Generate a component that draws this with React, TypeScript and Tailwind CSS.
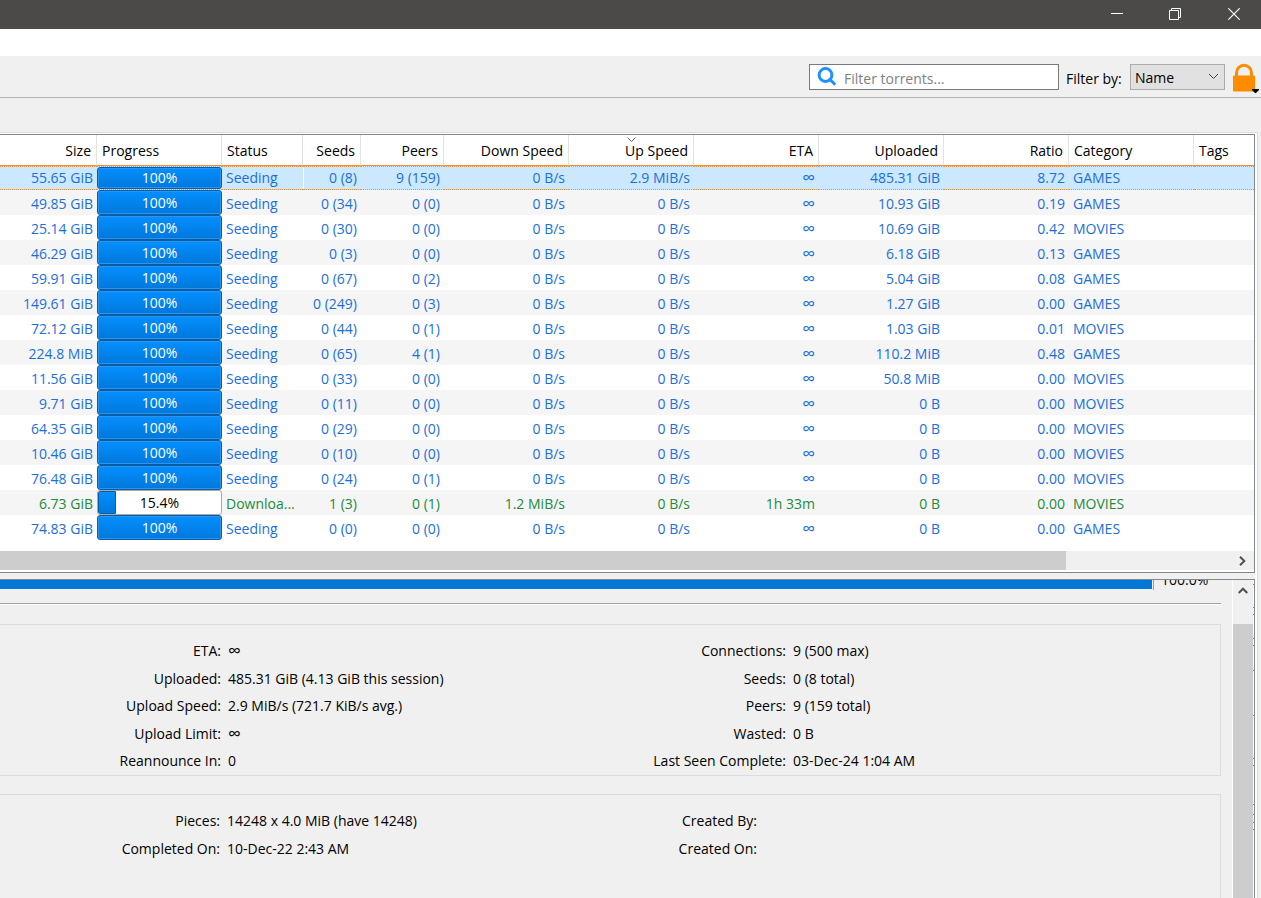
import React from "react";

type Torrent = {
  size: string;
  progress: number;
  status: string;
  seeds: string;
  peers: string;
  down: string;
  up: string;
  eta: string;
  uploaded: string;
  ratio: string;
  category: string;
};

const seeding = (
  size: string,
  seeds: string,
  peers: string,
  uploaded: string,
  ratio: string,
  category: string,
  up = "0 B/s",
): Torrent => ({
  size,
  progress: 100,
  status: "Seeding",
  seeds,
  peers,
  down: "0 B/s",
  up,
  eta: "∞",
  uploaded,
  ratio,
  category,
});

const torrents: Torrent[] = [
  seeding("55.65 GiB", "0 (8)", "9 (159)", "485.31 GiB", "8.72", "GAMES", "2.9 MiB/s"),
  seeding("49.85 GiB", "0 (34)", "0 (0)", "10.93 GiB", "0.19", "GAMES"),
  seeding("25.14 GiB", "0 (30)", "0 (0)", "10.69 GiB", "0.42", "MOVIES"),
  seeding("46.29 GiB", "0 (3)", "0 (0)", "6.18 GiB", "0.13", "GAMES"),
  seeding("59.91 GiB", "0 (67)", "0 (2)", "5.04 GiB", "0.08", "GAMES"),
  seeding("149.61 GiB", "0 (249)", "0 (3)", "1.27 GiB", "0.00", "GAMES"),
  seeding("72.12 GiB", "0 (44)", "0 (1)", "1.03 GiB", "0.01", "MOVIES"),
  seeding("224.8 MiB", "0 (65)", "4 (1)", "110.2 MiB", "0.48", "GAMES"),
  seeding("11.56 GiB", "0 (33)", "0 (0)", "50.8 MiB", "0.00", "MOVIES"),
  seeding("9.71 GiB", "0 (11)", "0 (0)", "0 B", "0.00", "MOVIES"),
  seeding("64.35 GiB", "0 (29)", "0 (0)", "0 B", "0.00", "MOVIES"),
  seeding("10.46 GiB", "0 (10)", "0 (0)", "0 B", "0.00", "MOVIES"),
  seeding("76.48 GiB", "0 (24)", "0 (1)", "0 B", "0.00", "MOVIES"),
  {
    size: "6.73 GiB",
    progress: 15.4,
    status: "Downloa...",
    seeds: "1 (3)",
    peers: "0 (1)",
    down: "1.2 MiB/s",
    up: "0 B/s",
    eta: "1h 33m",
    uploaded: "0 B",
    ratio: "0.00",
    category: "MOVIES",
  },
  seeding("74.83 GiB", "0 (0)", "0 (0)", "0 B", "0.00", "GAMES"),
];

const columns = [
  { label: "Size", width: "w-[97px]", right: true },
  { label: "Progress", width: "w-[125px]", right: false },
  { label: "Status", width: "w-[81px]", right: false },
  { label: "Seeds", width: "w-[58px]", right: true },
  { label: "Peers", width: "w-[83px]", right: true },
  { label: "Down Speed", width: "w-[125px]", right: true },
  { label: "Up Speed", width: "w-[125px]", right: true, sorted: true },
  { label: "ETA", width: "w-[125px]", right: true },
  { label: "Uploaded", width: "w-[125px]", right: true },
  { label: "Ratio", width: "w-[125px]", right: true },
  { label: "Category", width: "w-[125px]", right: false },
  { label: "Tags", width: "w-auto", right: false },
];

function TitleBar() {
  return (
    <header className="flex h-[29px] items-center justify-end bg-[#4c4a48] pb-[2px] text-white">
      <button aria-label="Minimize" className="flex h-full w-[52px] items-center justify-center">
        <svg width="12" height="12" viewBox="0 0 12 12" stroke="currentColor" fill="none">
          <path d="M0 5.5h12" />
        </svg>
      </button>
      <button aria-label="Restore" className="flex h-full w-[64px] items-center justify-center">
        <svg width="12" height="12" viewBox="0 0 12 12" stroke="currentColor" fill="none">
          <path d="M.5 2.5h9v9h-9zM2.5 2.5v-2h9v9h-2" />
        </svg>
      </button>
      <button aria-label="Close" className="flex h-full w-[54px] items-center justify-center">
        <svg width="12" height="12" viewBox="0 0 12 12" stroke="currentColor" strokeWidth="1.2" fill="none">
          <path d="M.3.3l11.4 11.4M11.7.3L.3 11.7" />
        </svg>
      </button>
    </header>
  );
}

function Toolbar() {
  return (
    <div className="flex h-[42px] items-center justify-end border-b border-[#b4b4b4] pr-[2px]">
      <div className="flex h-[26px] w-[250px] items-center gap-2 border border-[#7a7a7a] bg-white pl-[7px]">
        <svg width="19" height="19" viewBox="0 0 19 19" fill="none" stroke="#1e90ff">
          <circle cx="8.5" cy="8" r="6.4" strokeWidth="3" />
          <path d="M13 12.5l4.3 4.3" strokeWidth="3" strokeLinecap="round" />
        </svg>
        <input
          type="text"
          aria-label="Filter torrents"
          placeholder="Filter torrents..."
          className="min-w-0 flex-1 bg-transparent pt-1 outline-none placeholder:text-[#7f7f7f]"
        />
      </div>
      <label htmlFor="filter-by" className="ml-[7px] w-16 pt-1">
        Filter by:
      </label>
      <div className="grid h-[26px] w-[95px] items-center border border-[#adadad] bg-[#e1e1e1]">
        <select id="filter-by" className="col-start-1 row-start-1 h-full w-full appearance-none bg-transparent pt-[2px] pl-1 outline-none">
          <option>Name</option>
        </select>
        <svg className="pointer-events-none col-start-1 row-start-1 mr-[5px] justify-self-end" width="11" height="7" viewBox="0 0 11 7" fill="none" stroke="#404040">
          <path d="M1 1l4.5 4.5L10 1" />
        </svg>
      </div>
      <button aria-label="Lock" className="ml-2 pt-[2px]">
        <svg width="26" height="30" viewBox="0 0 26 30">
          <path d="M3.5 13V10a7.5 7.7 0 0 1 15 0v3" fill="none" stroke="#ff8c00" strokeWidth="3" />
          <rect x="0" y="12.5" width="22" height="16" rx="1" fill="#ff8c00" />
          <path d="M19 26h7v1l-3 3h-1l-3-3z" fill="#000" />
        </svg>
      </button>
    </div>
  );
}

function Value({ text }: { text: string }) {
  return text === "∞" ? <span className="align-[-1px] text-[18px] leading-[14px]">∞</span> : <>{text}</>;
}

function ProgressCell({ value, selected }: { value: number; selected: boolean }) {
  const done = value === 100;
  return (
    <div
      role="progressbar"
      aria-valuenow={value}
      className={`grid items-center rounded-[3px] border text-center ${selected ? "h-[22px]" : "h-[25px]"} ${
        done
          ? "border-[#0a5ca3] bg-linear-to-b from-[#058fff] to-[#0078dc] text-white shadow-[inset_0_0_0_1px_#2a94ee]"
          : "overflow-hidden border-[#a8a8a8] bg-white text-black"
      }`}
    >
      {!done && (
        <div
          className="col-start-1 row-start-1 h-full rounded-l-[2px] border border-[#0a5ca3] bg-linear-to-b from-[#058fff] to-[#0078dc]"
          style={{ width: `${value - 1}%` }}
        />
      )}
      <span className={`col-start-1 row-start-1 leading-[20px] ${selected ? "" : "pt-px"}`}>{value}%</span>
    </div>
  );
}

function TorrentTable() {
  return (
    <table className="w-full table-fixed border-separate border-spacing-0">
      <thead>
        <tr>
          {columns.map((c, i) => (
            <th
              key={c.label}
              className={`${c.width} ${c.right ? "text-right" : "text-left"} ${
                i < columns.length - 1 ? "border-r border-r-[#e2e2e2]" : ""
              } relative h-[31px] border-b border-b-[#ff8c32] px-[5px] pt-[2px] pb-0 font-normal`}
            >
              {c.label}
              {c.sorted && (
                <svg className="absolute top-[2px] left-[47%]" width="9" height="5" viewBox="0 0 9 5" fill="none" stroke="#606060">
                  <path d="M.5.5l4 4 4-4" />
                </svg>
              )}
            </th>
          ))}
        </tr>
      </thead>
      <tbody>
        {torrents.map((t, i) => {
          const selected = i === 0;
          const line = selected ? "h-[24px] border-y border-dotted border-y-[#ff8c32]" : "h-[25px]";
          const pad = selected ? "py-0" : "pt-[2px] pb-0";
          const right = `${pad} pr-1 text-right ${line}`;
          const left = `${pad} pl-1 text-left ${line}`;
          return (
            <tr
              key={i}
              className={`${selected ? "bg-[#cce8ff]" : i % 2 ? "bg-[#f5f5f5]" : "bg-white"} ${
                t.progress === 100 ? "text-[#1a6fdc]" : "text-[#228b3c]"
              } whitespace-nowrap leading-[22px]`}
            >
              <td className={right}>{t.size}</td>
              <td className={`p-0 ${line}`}>
                <ProgressCell value={t.progress} selected={selected} />
              </td>
              <td className={left}>{t.status}</td>
              <td className={`${right} ${selected ? "shadow-[inset_1px_0_0_#fff]" : ""}`}>{t.seeds}</td>
              <td className={right}>{t.peers}</td>
              <td className={right}>{t.down}</td>
              <td className={right}>{t.up}</td>
              <td className={right}>
                <Value text={t.eta} />
              </td>
              <td className={right}>{t.uploaded}</td>
              <td className={right}>{t.ratio}</td>
              <td className={left}>{t.category}</td>
              <td className={left}></td>
            </tr>
          );
        })}
      </tbody>
    </table>
  );
}

function Facts({ rows, labelWidth, grow }: { rows: [string, string][]; labelWidth: string; grow?: boolean }) {
  return (
    <dl className={grow ? "min-w-0 flex-1" : "w-[565px]"}>
      {rows.map(([k, v], i) => (
        <div key={k} className={`flex gap-[7px] ${i % 2 ? "h-[27px]" : "h-[28px]"}`}>
          <dt className={`${labelWidth} text-right`}>{k}</dt>
          <dd>
            <Value text={v} />
          </dd>
        </div>
      ))}
    </dl>
  );
}

function Details() {
  return (
    <section className="relative flex min-h-0 flex-1 overflow-hidden border-t border-r border-[#828790] bg-[#f0f0f0]">
      <div className="min-w-0 flex-1 pr-[11px]">
        <div className="flex h-[23px] items-start overflow-hidden">
          <div className="h-[9px] flex-1 bg-[#0078d7]" />
          <div className="ml-px h-[10px] w-px bg-[#a0a0a0]" />
          <div className="flex h-[7px] w-[67px] items-end overflow-hidden pl-[7px] leading-[15px]">100.0%</div>
        </div>
        <div className="h-[2px] border-t border-[#a0a0a0] bg-white" />
        <div className="mt-[19px] flex h-[152px] border-y border-r border-[#dcdcdc] pt-4">
          <Facts
            labelWidth="w-[221px]"
            rows={[
              ["ETA:", "∞"],
              ["Uploaded:", "485.31 GiB (4.13 GiB this session)"],
              ["Upload Speed:", "2.9 MiB/s (721.7 KiB/s avg.)"],
              ["Upload Limit:", "∞"],
              ["Reannounce In:", "0"],
            ]}
          />
          <Facts
            grow
            labelWidth="w-[221px]"
            rows={[
              ["Connections:", "9 (500 max)"],
              ["Seeds:", "0 (8 total)"],
              ["Peers:", "9 (159 total)"],
              ["Wasted:", "0 B"],
              ["Last Seen Complete:", "03-Dec-24 1:04 AM"],
            ]}
          />
        </div>
        <div className="mt-[18px] flex h-[152px] border-y border-r border-[#dcdcdc] pt-4">
          <Facts
            labelWidth="w-[220px]"
            rows={[
              ["Pieces:", "14248 x 4.0 MiB (have 14248)"],
              ["Completed On:", "10-Dec-22 2:43 AM"],
            ]}
          />
          <Facts
            grow
            labelWidth="w-[192px]"
            rows={[
              ["Created By:", ""],
              ["Created On:", ""],
            ]}
          />
        </div>
      </div>
      <div className="flex w-[22px] flex-col border-x border-white">
        <button aria-label="Scroll up" className="flex h-[44px] justify-center pt-[7px]">
          <svg width="10" height="7" viewBox="0 0 10 7" fill="none" stroke="#505050" strokeWidth="2">
            <path d="M.7 6L5 1.7 9.3 6" />
          </svg>
        </button>
        <div className="flex-1 bg-[#cdcdcd]" />
      </div>
      <svg className="absolute top-0 right-0" width="1" height="260" viewBox="0 0 1 260" fill="#828790">
        {[4, 27, 34, 58, 65, 90, 135, 178, 185, 224, 234, 242, 249].map((y) => (
          <rect key={y} y={y} width="1" height="1" />
        ))}
      </svg>
    </section>
  );
}

export default function App() {
  return (
    <div className="flex h-screen flex-col overflow-hidden bg-[#f0f0f0] font-['Open_Sans','Noto_Sans',sans-serif] text-[14px] leading-[20px] text-black">
      <TitleBar />
      <div className="h-[27px] bg-white" />
      <Toolbar />
      <main className="mt-[34px] mr-[3px] flex min-h-0 flex-1 flex-col border-t border-r border-[#dcdcdc] bg-white pt-px pr-[2px]">
        <section className="border-y border-r border-[#828790] bg-white">
          <TorrentTable />
          <div className="mt-[11px] mb-[2px] flex h-[19px] bg-[#f0f0f0]">
            <div className="w-[85%] bg-[#cdcdcd]" />
            <button aria-label="Scroll right" className="ml-auto flex w-[24px] items-center justify-center">
              <svg width="7" height="10" viewBox="0 0 7 10" fill="none" stroke="#505050" strokeWidth="2">
                <path d="M1 .7L5.3 5 1 9.3" />
              </svg>
            </button>
          </div>
        </section>
        <div className="h-[6px] bg-[#f0f0f0]" />
        <Details />
      </main>
    </div>
  );
}
